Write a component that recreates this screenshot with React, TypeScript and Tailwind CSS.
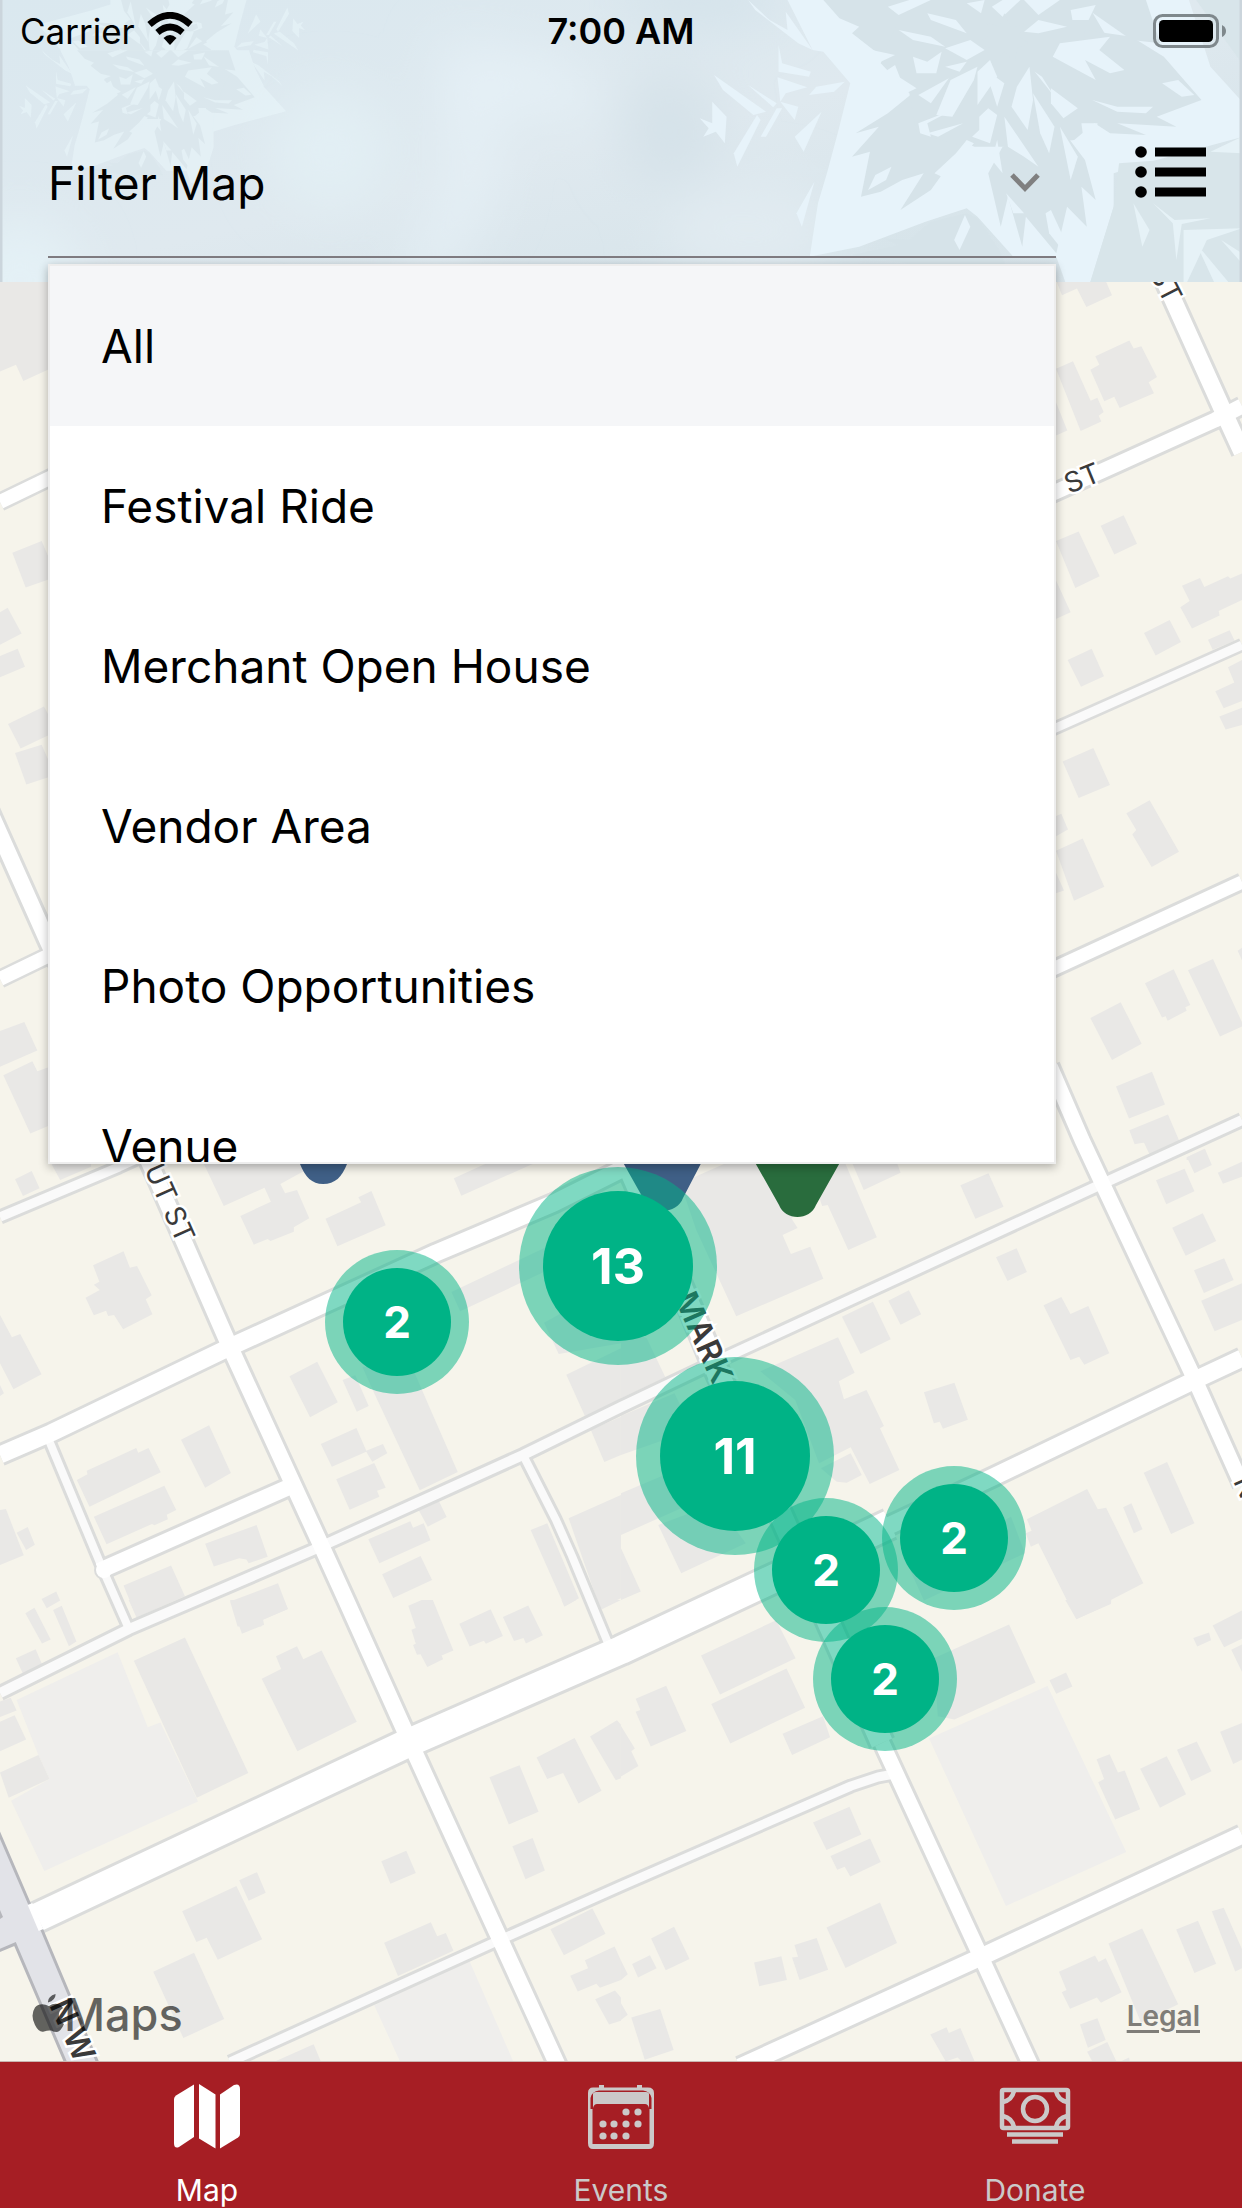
import { useState } from "react";

const FILTERS = ["All", "Festival Ride", "Merchant Open House", "Vendor Area", "Photo Opportunities", "Venue"];

type Road = { d: string; casing: number; fill: number; color: string };

const ROADS: Road[] = [
  { d: "M0 1217 L119 1167 L300 1085", casing: 15, fill: 9, color: "#fafafa" },
  { d: "M0 1693 L129 1629 L150 1620 L313 1550 L523 1455 L621 1407 L726 1357 L1104 1183 L1242 1120", casing: 16, fill: 10, color: "#fafafa" },
  { d: "M48 1438 L103 1570 L129 1629", casing: 14, fill: 8, color: "#fafafa" },
  { d: "M523 1455 L556 1520 L572 1556 L608 1643", casing: 14, fill: 8, color: "#fafafa" },
  { d: "M230 2062 L493 1943 L621 1886 L851 1786 L878 1777 L894 1774", casing: 15, fill: 9, color: "#fafafa" },
  { d: "M1040 735 L1242 645", casing: 14, fill: 9, color: "#fafafa" },
  { d: "M0 502 L60 473", casing: 19, fill: 14, color: "#fff" },
  { d: "M0 979 L60 950", casing: 19, fill: 14, color: "#fff" },
  { d: "M1040 499 L1215 420 L1242 406", casing: 21, fill: 15, color: "#fff" },
  { d: "M1040 975 L1242 882", casing: 19, fill: 13, color: "#fff" },
  { d: "M0 1455 L51 1433 L230 1347 L436 1253 L554 1203 L640 1160", casing: 23, fill: 17, color: "#fff" },
  { d: "M99 1571 L289 1487", casing: 22, fill: 16, color: "#fff" },
  { d: "M740 2067 L981 1957 L1242 1835", casing: 23, fill: 17, color: "#fff" },
  { d: "M880 1530 L993 1477 L1195 1380 L1242 1358", casing: 23, fill: 17, color: "#fff" },
  { d: "M36 1918 L408 1743 L621 1650 L700 1613 L890 1524", casing: 34, fill: 28, color: "#fff" },
  { d: "M-10 812 L48 942 L154 1173 L230 1347 L321 1545 L346 1600 L408 1738 L499 1937 L558 2066", casing: 22, fill: 16, color: "#fff" },
  { d: "M628 1164 L691 1310 L712 1360 L882 1743", casing: 28, fill: 22, color: "#fff" },
  { d: "M882 1743 L981 1957 L1033 2070", casing: 21, fill: 15, color: "#fff" },
  { d: "M1050 1066 L1082 1140 L1104 1187 L1195 1380 L1242 1485", casing: 21, fill: 15, color: "#fff" },
  { d: "M1156 262 L1225 415 L1242 452", casing: 23, fill: 17, color: "#fff" },
];

type Block = { transform: string; buildings: string[]; lots?: string[] };

const BLOCKS: Block[] = [
  {
    transform: "translate(0 280) scale(0.3333 0.5612)",
    buildings: [
      "0,0 150,0 150,158 70,180 48,151 0,163",
      "37,486 125,465 150,500 150,533 77,548",
      "0,592 23,584 65,630 0,650", "0,670 53,657 75,689 0,708",
      "24,791 132,760 150,780 150,810 62,835", "45,843 125,828 150,862 150,885 79,899",
      "0,1338 73,1322 112,1373 0,1402", "10,1417 97,1392 112,1410 150,1402 150,1506 91,1521",
    ],
  },
  {
    transform: "translate(1042 280) scale(0.3333 0.5612)",
    buildings: [
      "42,0 190,0 210,27 133,48 105,15 60,27", "145,160 172,151 160,136 262,108 275,122 298,118 345,173 320,182 336,202 233,228 217,208 187,216",
      "42,158 93,145 146,215 166,210 185,235 170,242 178,252 116,269", "30,200 76,268 30,280",
      "176,438 245,419 285,470 217,489", "42,465 110,448 173,528 100,549", "30,520 86,592 30,607",
      "77,677 149,657 186,706 117,725", "306,629 383,606 417,645 341,669",
      "420,545 474,531 487,547 558,528 565,532 600,523 600,570 530,590 533,598 450,621 415,583 443,572",
      "498,641 563,624 578,643 512,659", "520,733 577,717 558,690 600,677 600,750 545,763", "532,778 600,762 600,793 551,801",
      "62,858 154,834 204,900 110,923", "253,950 323,927 411,1019 329,1046 271,988 283,980",
      "42,955 58,951 78,979 30,995", "42,1017 122,995 187,1081 96,1106", "30,1040 66,1088 30,1095",
      "309,1253 395,1228 445,1292 430,1296 434,1302 377,1320 371,1312 360,1314", "438,1230 513,1210 605,1329 534,1348",
      "145,1315 236,1287 299,1361 210,1390", "222,1437 330,1411 369,1469 261,1494",
      "262,1515 378,1487 412,1534 322,1557 306,1537 278,1540", "587,1195 600,1190 600,1212", "434,1563 488,1548 500,1568 434,1568",
    ],
  },
  {
    transform: "translate(0 1140) scale(0.396 0.3333)",
    buildings: [
      "38,118 80,93 100,145 58,168", "130,72 230,72 230,80 152,120",
      "515,72 800,72 708,132 720,160 750,150 781,235 742,262 742,275 683,303 676,297 641,314 607,228 684,185 668,143 565,198",
      "822,236 912,187 905,172 938,153 974,256 852,319", "1146,115 1225,72 1345,72 1165,167",
      "1140,456 1400,310 1420,370 1162,514", "235,376 312,334 328,383 346,378 383,466 368,478 385,523 311,568 288,525 273,528 268,512 237,526 216,473 252,450 237,434 251,425",
      "0,525 30,592 51,582 105,703 34,748 0,670", "0,735 10,760 0,768", "731,709 801,665 853,787 783,832",
      "865,720 897,706 931,798 901,815", "915,680 1040,680 1156,996 1060,1051 945,760", "810,912 900,864 925,932 967,912 978,940 940,965 925,935 838,980",
      "849,1018 945,969 974,1043 952,1052 958,1070 883,1109", "457,899 528,856 583,999 518,1043",
      "194,1020 221,1003 219,992 344,924 349,938 375,924 406,997 226,1100", "237,1130 415,1037 445,1110 421,1124 424,1138 390,1156 384,1152 269,1213",
      "518,1211 648,1155 676,1250 628,1270 622,1259 604,1255 540,1280", "312,1337 432,1277 467,1369 345,1432",
      "581,1385 702,1330 727,1407 663,1440 660,1460 600,1460", "105,1377 142,1355 152,1382 118,1405",
      "930,1198 1036,1144 1043,1163 1070,1150 1087,1201 958,1270", "1056,1108 1106,1078 1128,1131 1080,1160",
      "965,1303 1062,1248 1091,1320 993,1374", "0,1110 15,1107 60,1246 0,1275", "42,1178 70,1161 88,1214 66,1230",
      "1374,548 1440,505 1568,560 1568,610 1411,642", "1430,704 1568,625 1568,780 1477,828", "1492,870 1568,830 1568,945 1526,966",
      "1340,1170 1382,1150 1462,1375 1426,1400", "1436,1135 1568,1065 1568,1375 1515,1405",
    ],
  },
  {
    transform: "translate(621 1140) scale(0.396 0.3333)",
    buildings: [
      "150,130 260,72 567,72 646,292 574,330 522,195 508,198 500,170 430,235 446,264 408,285 429,342 478,320 511,416 291,529 190,270",
      "585,72 698,72 706,98 613,150", "857,136 928,100 966,200 895,236", "947,352 999,325 1025,396 976,423",
      "675,482 727,451 758,523 706,554", "558,530 636,485 681,598 605,642", "0,560 65,595 112,712 0,775",
      "352,694 548,592 590,698 550,724 563,778 620,750 664,858 654,865 703,990 628,1032 580,922 500,970 440,780",
      "505,985 580,940 608,1005 570,1028 545,1025", "0,828 135,760 180,870 0,945", "0,1060 120,1000 180,1090 0,1185",
      "765,757 842,728 876,839 813,866 805,845 790,850", "1067,496 1112,471 1135,522 1180,498 1233,640 1170,674 1157,650 1135,660",
      "1351,121 1423,86 1448,154 1377,193", "1429,52 1475,28 1492,75 1448,100", "1507,98 1568,65 1568,110 1520,131",
      "1293,0 1410,0 1335,42 1322,8", "1392,263 1469,220 1503,303 1426,347", "1447,391 1523,355 1547,420 1472,459",
      "1465,482 1568,430 1568,540 1499,574", "1025,1138 1177,1047 1204,1108 1225,1103 1319,1330 1237,1380 1237,1390 1150,1438 1054,1210 1035,1220 1022,1180 1037,1172",
      "1268,1102 1289,1090 1317,1168 1295,1180", "1320,998 1379,966 1448,1150 1389,1182", "94,1155 240,1090 315,1210 152,1300",
      "0,1225 50,1355 0,1380", "730,1290 985,1130 1020,1240 765,1382",
    ],
  },
  {
    transform: "translate(0 1600) scale(0.396 0.3877)",
    lots: ["42,258 297,135 373,328 405,316 500,520 112,699 28,518 125,462 97,400", "945,1045 1185,930 1296,1190 1010,1190"],
    buildings: [
      "338,157 467,97 627,446 497,510", "661,203 710,178 697,145 750,119 766,153 812,130 901,314 751,390",
      "64,34 87,20 128,102 106,112", "134,26 156,15 193,107 174,119", "40,150 90,127 108,170 60,195",
      "0,262 27,252 42,285 0,302", "0,314 37,297 66,360 0,390", "0,445 97,400 125,462 22,510",
      "325,0 440,0 345,45", "581,0 717,0 727,23 664,50 667,64 611,87",
      "1031,15 1065,0 1093,0 1145,130 1115,143 1119,153 1079,173 1062,140 1053,141 1043,116 1050,113 1039,77 1050,72",
      "1160,61 1239,24 1270,93 1227,113 1222,105 1186,120", "1270,44 1334,14 1371,91 1328,112 1322,98 1298,106",
      "1236,457 1312,426 1360,546 1285,579", "1355,406 1451,356 1519,492 1461,525 1422,446 1382,462",
      "1490,352 1558,310 1568,322 1568,460 1555,465", "1294,635 1345,614 1376,698 1327,720",
      "963,674 1026,647 1050,704 986,732", "604,723 649,702 671,755 628,776", "460,803 597,738 662,875 550,928 522,871 496,882",
      "387,959 490,910 566,1081 463,1130", "970,884 1088,831 1104,867 1126,859 1145,905 1005,970",
      "1390,849 1496,796 1529,861 1424,916", "1440,969 1485,950 1477,929 1552,894 1568,930 1568,980 1515,1000 1506,990 1459,1010",
      "1503,1030 1553,1007 1568,1025 1568,1085 1538,1095", "695,1190 792,1146 810,1190", "1500,0 1568,0 1520,24", "1418,0 1455,0 1425,17",
    ],
  },
  {
    transform: "translate(621 1600) scale(0.396 0.3877)",
    lots: ["778,357 1077,222 1276,650 972,789"],
    buildings: [
      "202,143 392,52 441,150 250,244", "228,268 418,177 465,278 276,370", "37,255 114,221 165,338 75,378 37,288 49,284",
      "408,345 510,300 528,354 432,400", "0,325 35,383 26,390 44,428 0,455", "790,150 980,63 1047,213 842,308 800,300",
      "1082,207 1124,187 1140,223 1099,242", "1122,0 1238,0 1237,10 1150,49", "1445,98 1485,84 1490,104 1455,120",
      "1494,66 1568,27 1568,100 1523,122", "1541,128 1568,115 1568,185", "1201,411 1234,398 1255,445 1272,440 1311,540 1248,566 1205,470 1220,462",
      "1311,435 1378,403 1427,501 1361,536", "1404,386 1454,365 1491,442 1440,467", "1513,340 1568,317 1568,412 1546,423",
      "485,574 577,533 607,605 519,645", "529,660 629,615 656,676 579,713 565,688 546,696", "519,845 654,780 697,885 567,949",
      "438,890 494,872 523,954 451,980 432,922 447,920", "336,935 405,919 419,980 349,996", "76,873 134,843 173,926 113,955",
      "28,939 73,916 90,950 43,974", "0,930 17,965 0,980", "0,1040 17,1070 0,1083", "26,1077 99,1055 133,1161 60,1186",
      "1106,959 1197,917 1206,934 1224,924 1264,1012 1212,1039 1202,1025 1134,1054 1113,1012 1125,1006",
      "1231,886 1316,847 1407,1043 1313,1090", "1402,850 1457,827 1503,938 1448,962", "1492,803 1522,794 1568,900 1568,950 1551,958",
      "1159,1095 1203,1079 1224,1135 1179,1155", "1177,1165 1228,1140 1251,1190 1190,1190",
      "781,1121 822,1102 828,1117 857,1104 893,1190 860,1190 850,1180 820,1190", "1262,1190 1283,1180 1285,1190",
    ],
  },
];

function StreetMap() {
  const label = { fill: "#3a3a3a", stroke: "#fff", strokeWidth: 5, paintOrder: "stroke" as const };
  return (
    <svg
      aria-hidden="true"
      viewBox="0 282 1242 1779"
      preserveAspectRatio="xMidYMid slice"
      className="absolute inset-0 h-full w-full"
      fontFamily="Inter, sans-serif"
    >
      <rect y="282" width="1242" height="1781" fill="#f6f4eb" />
      {BLOCKS.map((block) => (
        <g key={block.transform} transform={block.transform}>
          {block.lots?.map((points) => <polygon key={points} points={points} fill="#efeeec" />)}
          {block.buildings.map((points) => <polygon key={points} points={points} fill="#e9e8e6" />)}
        </g>
      ))}
      <g fill="none" stroke="#dbdcdb" strokeLinejoin="round">
        {ROADS.map((road) => <path key={road.d} d={road.d} strokeWidth={road.casing} />)}
      </g>
      <circle cx="104" cy="1570" r="10" fill="#dbdcdb" />
      <g fill="none" strokeLinejoin="round">
        {ROADS.map((road) => <path key={road.d} d={road.d} strokeWidth={road.fill} stroke={road.color} />)}
      </g>
      <circle cx="104" cy="1570" r="8" fill="#fff" />
      <path d="M-4 1826 L30 1905 L42 1930 L100 2068 H68 L15 1944 L-4 1952 Z" fill="#e2e3e8" stroke="#b6b7bc" strokeWidth="3" />
      <path d="M30 1904 L41 1930" stroke="#fff" strokeWidth="5" />
      <path d="M0 1910 L3 1917 L0 1919 Z" fill="#b6b7bc" />
      <g {...label} fontSize="28">
        <text transform="translate(144 1169) rotate(66)">UT ST</text>
        <text transform="translate(1069 494) rotate(-22)">ST</text>
        <text transform="translate(1149 273) rotate(63)">ST</text>
        <text transform="translate(1233 1481) rotate(66)">N</text>
      </g>
      <g {...label} fontSize="32" fontWeight="600">
        <text transform="translate(674 1298) rotate(66)">MARK</text>
        <text transform="translate(49 2005) rotate(66)">N W</text>
      </g>
      <path d="M300 1150 H347 V1164 C342 1177 335 1184 323 1184 C312 1184 305 1177 300 1164 Z" fill="#3f5f86" />
      <path d="M616 1150 H708 L683 1198 C677 1215 649 1215 643 1198 Z" fill="#3f5f86" />
      <path d="M748 1150 H847 L816 1205 C810 1221 785 1221 779 1205 Z" fill="#296c3d" />
    </svg>
  );
}

const FLAKE_BASE =
  "M300 0 L370 150 L400 155 L475 250 L440 400 L410 520 L385 610 L362 770 L500 740 L685 665 L800 625 L830 650 L930 770 L1050 770 L1075 846 L1145 846 L1210 620 L1210 520 L1330 480 L1640 390 L1480 200 L1420 0 Z";

const FLAKE_SHADE = [
  "M400 0 L445 55 L500 80 L480 100 L540 150 L600 190 L760 110 L800 0 Z",
  "M660 270 L580 340 L490 400 L555 380 L480 470 L530 455 L505 590 L560 575 L620 540 L680 520 L615 630 L700 570 L760 480 L800 420 L760 330 Z",
  "M560 190 L620 30 L700 0 L1130 0 L1240 200 L1200 330 L1100 420 L950 440 L800 440 L660 400 L640 280 Z",
  "M900 440 L860 520 L895 680 L915 590 L955 740 L965 650 L1050 760 L1080 620 L1135 680 L1120 560 L1160 600 L1130 480 L1060 380 Z",
  "M1130 90 L1260 110 L1350 170 L1455 300 L1330 350 L1385 380 L1220 370 L1300 405 L1200 400 L1100 330 Z",
  "M1100 0 H1300 L1340 130 L1260 120 Z",
  "M700 665 L640 720 L565 715 L610 735 L480 765 L700 800 H910 L890 750 L830 655 L800 640 Z",
];

const FLAKE_LIGHT = [
  "M755 240 L830 200 L820 240 L760 350 L715 345 Z", "M830 215 L865 180 L885 230 L830 315 Z",
  "M940 260 L975 200 L985 300 L970 390 L925 320 Z", "M860 240 L880 230 L905 250 L885 320 L870 270 Z",
  "M835 350 L860 325 L885 345 L865 430 L815 410 L835 390 Z", "M905 350 L1000 500 L960 470 L915 440 Z",
  "M975 195 L1045 290 L1010 230 L990 215 Z", "M985 280 L1045 380 L1030 460 L1005 400 Z",
  "M650 170 L690 185 L730 155 L715 220 L660 220 Z", "M740 145 L810 120 L850 150 L800 180 Z",
  "M740 200 L800 185 L780 215 Z", "M1035 265 L1110 325 L1070 355 L1035 310 Z",
  "M960 95 L1000 60 L1080 80 L1000 100 Z", "M1040 170 L1160 240 L1130 180 L1200 220 L1240 210 L1170 150 L1200 110 L1060 130 Z",
  "M665 285 L750 235 L700 310 Z", "M665 370 L760 330 L690 370 L700 410 L670 400 Z",
  "M690 400 L790 370 L720 410 Z", "M580 20 L640 0 L700 0 L610 45 Z", "M690 40 L770 60 L800 100 L700 60 Z",
  "M800 10 L850 0 L840 40 Z", "M870 20 L900 0 L950 0 L900 50 Z", "M960 0 L1060 0 L1000 45 Z",
  "M1090 30 L1160 15 L1140 60 L1095 60 Z", "M610 90 L700 110 L740 140 L650 120 Z",
  "M565 220 L600 195 L620 250 L570 235 Z", "M535 150 L600 165 L560 185 Z", "M610 230 L660 265 L610 290 Z",
  "M525 570 L545 525 L590 500 L575 540 Z", "M1020 640 L1035 630 L1065 700 L1060 740 L1030 700 Z",
  "M1345 250 L1390 240 L1435 285 L1400 290 Z", "M710 520 L770 460 L800 420 L820 430 L790 470 L750 540 Z",
  "M810 490 L840 475 L850 500 L825 520 Z", "M800 430 L880 470 L850 520 L830 470 Z", "M885 420 L900 520 L870 480 Z",
  "M1120 370 L1165 370 L1160 415 L1125 410 Z", "M1060 380 L1110 470 L1090 540 Z",
  "M1150 300 L1220 320 L1320 320 L1300 340 L1220 335 Z", "M795 645 L810 680 L780 750 L765 720 Z",
  "M910 580 L960 640 L930 640 Z", "M95 225 L240 335 L205 345 L120 270 Z", "M190 255 L270 310 L260 322 Z",
  "M275 135 L285 190 L365 215 L360 230 L275 215 Z", "M272 232 L355 262 L295 280 L280 305 Z",
  "M360 285 L380 260 L460 245 L430 275 Z", "M280 305 L330 320 L320 360 Z", "M225 410 L270 325 L285 325 L240 410 Z",
  "M320 410 L395 335 L345 455 Z", "M150 460 L215 345 L225 360 L160 500 Z",
  "M90 305 L130 350 L125 430 L100 395 L65 410 L80 385 L55 355 L90 370 Z", "M325 640 L375 545 L340 680 Z",
  "M190 0 L250 60 L300 90 L295 35 L370 150 L330 130 L210 30 Z",
];

const CORNER_LIGHT = [
  "M1265 610 L1310 690 L1290 740 Z", "M1320 610 L1380 660 L1480 655 L1400 672 L1385 780 L1375 670 Z",
  "M1405 690 L1568 685 L1470 720 L1415 846 L1405 846 Z", "M1440 730 L1530 846 H1490 Z", "M1510 720 L1568 760 V790 Z",
  "M1480 455 L1568 410 V460 Z",
];

function Snowflake({ shade, light }: { shade: string; light: string }) {
  return (
    <g transform="scale(0.3584 0.3333)">
      <path d={FLAKE_BASE} fill={light} />
      {FLAKE_SHADE.map((d) => <path key={d} d={d} fill={shade} />)}
      {FLAKE_LIGHT.map((d) => <path key={d} d={d} fill={light} />)}
      <path fill={shade} d="M905 40 L925 85 L960 70 L945 110 L975 130 L940 145 L935 190 L905 155 L870 185 L870 145 L830 130 L865 105 L855 65 L890 80 Z" />
    </g>
  );
}

function Frost() {
  return (
    <svg aria-hidden="true" viewBox="0 0 1242 282" preserveAspectRatio="xMidYMid slice" className="absolute inset-0 h-full w-full">
      <defs>
        <linearGradient id="sky" x1="0" y1="0" x2="1" y2="1">
          <stop offset="0" stopColor="#dae8ef" />
          <stop offset="0.5" stopColor="#dfe9ef" />
          <stop offset="0.8" stopColor="#d7e4ea" />
          <stop offset="1" stopColor="#dbe6ec" />
        </linearGradient>
        <filter id="soft" x="-50%" y="-50%" width="200%" height="200%">
          <feGaussianBlur stdDeviation="26" />
        </filter>
      </defs>
      <rect width="1242" height="282" fill="url(#sky)" />
      <g filter="url(#soft)">
        <path d="M440 40 L560 60 L620 120 L500 110 L490 200 L440 282 L400 282 L450 180 Z" fill="#e5f0f6" />
        <ellipse cx="670" cy="130" rx="50" ry="60" fill="#d5e2e9" />
        <ellipse cx="700" cy="0" rx="80" ry="24" fill="#d3e2ea" />
        <ellipse cx="750" cy="230" rx="90" ry="50" fill="#e1ebf1" />
        <ellipse cx="20" cy="280" rx="60" ry="60" fill="#e4f1f6" />
        <ellipse cx="330" cy="150" rx="60" ry="60" fill="#e2eff4" />
      </g>
      <g opacity="0.55">
        <g transform="translate(162 68) scale(-0.47) translate(-324 -38)">
          <Snowflake shade="#dae7ec" light="#eaf7fb" />
        </g>
        <g transform="translate(162 68) scale(0.47) translate(-324 -38)">
          <Snowflake shade="#dae7ec" light="#eaf7fb" />
        </g>
      </g>
      <g transform="translate(680 0)">
        <Snowflake shade="#d6e3e9" light="#e7f3fa" />
        <g transform="scale(0.3584 0.3333)">
          <path d="M1225 490 L1210 620 L1145 846 H1568 V430 L1350 480 Z M1440 0 H1568 V190 Z" fill="#d8e5ea" />
          {CORNER_LIGHT.map((d) => <path key={d} d={d} fill="#e6f2f7" />)}
        </g>
      </g>
      <path d="M1 0 V282 M1241 0 V282" stroke="#cbd5dc" strokeWidth="3" />
    </svg>
  );
}

function StatusBar() {
  return (
    <div className="relative grid h-[62px] grid-cols-3 items-center px-4">
      <div className="flex items-center gap-3 pl-1">
        <span className="text-[35px] leading-10">Carrier</span>
        <svg aria-label="Wi-Fi" viewBox="0 0 46 34" className="mb-1 h-[34px] w-[46px]">
          <path d="M23 33 L16.500 26 Q23 20 29.500 26 Z" />
          <path d="M10.500 20.500 Q23 9.500 35.500 20.500" fill="none" stroke="#000" strokeWidth="6.500" />
          <path d="M2.500 12.500 Q23 -6 43.500 12.500" fill="none" stroke="#000" strokeWidth="6.500" />
        </svg>
      </div>
      <span className="text-center text-[36px] font-semibold leading-10">7:00 AM</span>
      <svg aria-label="Battery full" viewBox="0 0 74 36" className="h-9 w-[74px] justify-self-end">
        <rect x="2.500" y="2.500" width="63" height="31" rx="8" fill="none" stroke="#7f888c" strokeWidth="3" />
        <rect x="7" y="7" width="54" height="22" rx="4.500" />
        <path d="M70 12 Q74 14 74 18 Q74 22 70 24 Z" fill="#7f888c" />
      </svg>
    </div>
  );
}

type Cluster = { count: number; big: boolean; at: string };

const CLUSTERS: Cluster[] = [
  { count: 13, big: true, at: "left-[618px] top-[984px]" },
  { count: 2, big: false, at: "left-[397px] top-[1040px]" },
  { count: 11, big: true, at: "left-[735px] top-[1174px]" },
  { count: 2, big: false, at: "left-[826px] top-[1288px]" },
  { count: 2, big: false, at: "left-[954px] top-[1256px]" },
  { count: 2, big: false, at: "left-[885px] top-[1397px]" },
];

function ClusterMarker({ count, big, at }: Cluster) {
  return (
    <button
      type="button"
      aria-label={`${count} places`}
      className={`absolute flex -translate-x-1/2 -translate-y-1/2 items-center justify-center rounded-full bg-[#00b386]/50 ${big ? "size-[198px]" : "size-36"} ${at}`}
    >
      <span
        className={`flex items-center justify-center rounded-full bg-[#00b386] font-bold text-white ${big ? "size-[150px] text-[50px]" : "size-[108px] text-[44px]"}`}
      >
        {count}
      </span>
    </button>
  );
}

function MapIcon() {
  return (
    <svg aria-hidden="true" viewBox="0 0 72 72" className="size-[72px]" fill="currentColor">
      <path d="M23 4.500 V57 L8 67 Q3 69 3 63 V19 Q3 17 5 15.500 Z" />
      <path d="M28 4 L44.500 14.500 V68.500 L28 58.500 Z" />
      <path d="M49 14.500 L63 5 Q69 3 69 9 V54 Q69 56 67 57.500 L49 68.500 Z" />
    </svg>
  );
}

function CalendarIcon() {
  const dots = [[41, 32], [53, 32], [18, 44], [29, 44], [41, 44], [53, 44], [18, 56], [29, 56], [41, 56]];
  return (
    <svg aria-hidden="true" viewBox="0 0 72 72" className="size-[72px]" fill="currentColor">
      <path d="M14 5 h5 v4 h-5 Z M52 5 h5 v4 h-5 Z" />
      <path fillRule="evenodd" d="M8 7.500 H63 Q69 7.500 69 13 V63 Q69 69 64 69 H8 Q3 69 3 63 V13 Q3 7.500 8 7.500 Z M7.500 29 V64 H64.500 V29 H66.500 V18 Q65 11 58 10.500 H14 Q7 11 5.500 18 V29 Z" />
      <path d="M8 28 V14 Q8 12 11 12 H61 Q64 12 64 14 V28 Q63 24 60 24 H12 Q9 24 8 28 Z" />
      {dots.map(([cx, cy]) => <circle key={`${cx}-${cy}`} cx={cx} cy={cy} r="3.600" />)}
    </svg>
  );
}

function CashIcon() {
  return (
    <svg aria-hidden="true" viewBox="0 0 72 72" className="size-[72px]" fill="none" stroke="currentColor" strokeWidth="4.500">
      <rect x="3" y="10" width="66" height="38" rx="1.500" />
      <circle cx="36" cy="29" r="12" />
      <path d="M4 22 Q13 20 15 11 M68 22 Q59 20 57 11 M4 36 Q13 38 15 47 M68 36 Q59 38 57 47" />
      <path d="M8 54.500 H64 M13 61.500 H59" />
    </svg>
  );
}

const TABS = [
  { label: "Map", Icon: MapIcon },
  { label: "Events", Icon: CalendarIcon },
  { label: "Donate", Icon: CashIcon },
];

export default function App() {
  const [filter, setFilter] = useState("All");
  const [tab, setTab] = useState("Map");

  return (
    <div className="flex h-screen min-h-[1400px] flex-col overflow-hidden bg-[#f6f4eb] font-['Inter',sans-serif] text-black">
      <header className="relative z-10 pb-6">
        <Frost />
        <StatusBar />
        <div className="relative mt-12 flex items-start gap-[79px] pl-12 pr-9">
          <div className="relative flex-1">
            <button
              type="button"
              aria-haspopup="listbox"
              aria-expanded="true"
              aria-controls="filter-options"
              className="flex h-[148px] w-full items-center justify-between border-b-2 border-[#7f7b80] pr-4 text-left text-[46px]"
            >
              Filter Map
              <svg aria-hidden="true" viewBox="0 0 30 20" className="h-5 w-[30px]" fill="none" stroke="#808080" strokeWidth="5">
                <path d="M2 2 L15 15.500 L28 2" />
              </svg>
            </button>
            <ul
              id="filter-options"
              role="listbox"
              aria-label="Filter Map"
              className="absolute inset-x-0 top-full mt-1.5 h-[900px] overflow-hidden border-2 border-[#ededed] bg-white shadow-[0_3px_9px_rgba(0,0,0,0.3)]"
            >
              {FILTERS.map((name) => (
                <li key={name} role="option" aria-selected={name === filter}>
                  <button
                    type="button"
                    onClick={() => setFilter(name)}
                    className={`flex h-40 w-full items-center pl-[51px] text-left text-[46px] ${name === filter ? "bg-[#f5f6f8]" : "bg-white"}`}
                  >
                    {name}
                  </button>
                </li>
              ))}
            </ul>
          </div>
          <button type="button" aria-label="Show list" className="flex h-[124px] items-center">
            <svg aria-hidden="true" viewBox="0 0 71 52" className="h-[52px] w-[71px]">
              <circle cx="6" cy="6" r="5.800" />
              <circle cx="6" cy="26" r="5.800" />
              <circle cx="6" cy="46" r="5.800" />
              <path d="M20 1.500 h51 v9 h-51 Z M20 21.500 h51 v9 h-51 Z M20 41.500 h51 v9 h-51 Z" />
            </svg>
          </button>
        </div>
      </header>

      <main className="relative flex-1 overflow-hidden">
        <StreetMap />
        {CLUSTERS.map((cluster) => <ClusterMarker key={cluster.at} {...cluster} />)}
        <div className="absolute bottom-6 left-8 flex items-center text-[45px] font-medium leading-none text-black/60">
          <svg aria-hidden="true" viewBox="0 0 36 38" className="-mr-1 mb-1 h-[38px] w-9" fill="currentColor">
            <path d="M23.500 0 Q24 6 16 8.500 Q15.500 2.500 23.500 0 Z M17 12 Q21 9 26 10 Q29 11 31 14 Q26 17 27 23 Q28 28 32 30 Q29 37 25 38 Q22 38 19 36.500 Q16 36 12 37.500 Q7 39 3 31 Q-2 21 3 13.500 Q8 8 17 12 Z" />
          </svg>
          <span>Maps</span>
        </div>
        <a href="#legal" className="absolute bottom-6 right-[42px] text-[28px] font-semibold text-[#7f7d78] underline decoration-[3px] underline-offset-4">
          Legal
        </a>
      </main>

      <nav aria-label="Main" className="flex border-t border-[#c9b5b0] bg-[#a61e24]">
        {TABS.map(({ label, Icon }) => (
          <button
            key={label}
            type="button"
            aria-current={tab === label ? "page" : undefined}
            onClick={() => setTab(label)}
            className={`flex flex-1 flex-col items-center gap-5 pt-[18px] ${tab === label ? "text-white" : "text-[#cbc9c9]"}`}
          >
            <Icon />
            <span className="text-[30px] leading-9">{label}</span>
          </button>
        ))}
      </nav>
    </div>
  );
}
